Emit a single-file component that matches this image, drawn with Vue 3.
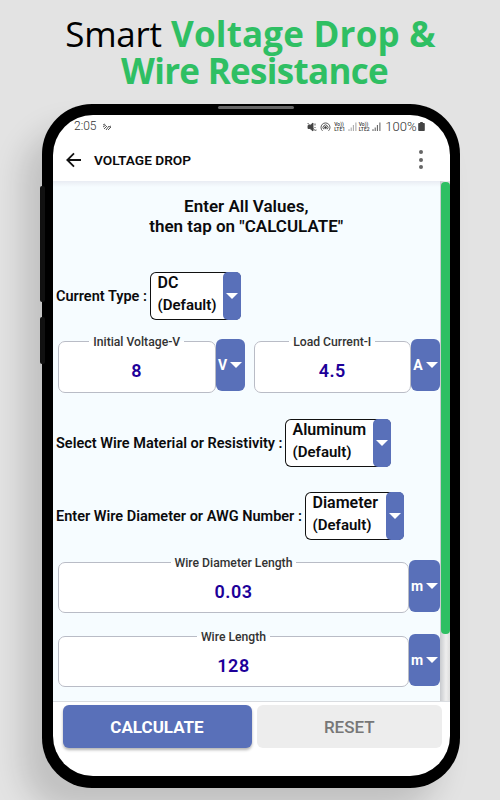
<template>
  <div class="poster">
    <h1 class="title">
      <span class="line first"><span class="dark">Smart</span> Voltage Drop &amp;</span>
      <span class="line second">Wire Resistance</span>
    </h1>

    <div class="phone">
      <i class="side-key volume"></i>
      <i class="side-key power"></i>
      <i class="speaker"></i>

      <div class="screen">
        <div class="status-bar">
          <span class="time">2:05</span>
          <svg class="status-mark" viewBox="0 0 10 8">
            <path d="M1 2l2-1M1 4l3-2M2 6l3-3M4 7l3-4M6 7l3-3M7 4l2-1" />
          </svg>
          <span class="spacer"></span>
          <svg class="mute" viewBox="0 0 10 10">
            <path class="fill" d="M1 3.5h2L6 1v8L3 6.5H1z" />
            <path d="M.6 1l8 8M8 1.5v2M8 5v1M9 7.5v1" />
          </svg>
          <svg class="hotspot" viewBox="0 0 10 10">
            <path d="M2 8.8a4.5 4.5 0 1 1 6 0M3.3 7.3a2.5 2.5 0 1 1 3.4 0" />
            <circle cx="5" cy="5.6" r="1" />
          </svg>
          <template v-for="n in 2" :key="n">
            <span class="lte"><span>Vo))</span><span>LTE{{ n }}</span></span>
            <svg :class="['signal', `signal-${n}`]" viewBox="0 0 9 9">
              <path d="M1 7.2V9M3.2 5.5V9M5.4 3V9M7.9 .5V9" />
            </svg>
          </template>
          <span class="percent">100%</span>
          <svg class="battery" viewBox="0 0 7 9">
            <path d="M2.2 0h2.6v1H6q.8 0 .8.8v6.4q0 .8-.8.8H1q-.8 0-.8-.8V1.8q0-.8.8-.8h1.2z" />
          </svg>
        </div>

        <header class="app-bar">
          <svg class="back" viewBox="0 0 16 16">
            <path d="M15 8H1.5M8 1.3L1.3 8 8 14.7" />
          </svg>
          <span class="app-title">VOLTAGE DROP</span>
          <span class="menu"><i></i><i></i><i></i></span>
        </header>

        <div class="body">
          <main class="form">
            <p class="intro">Enter All Values,<br />then tap on "CALCULATE"</p>

            <div v-for="s in selects" :key="s.id" :class="['select-row', s.id]">
              <span class="label">{{ s.label }}</span>
              <div class="select">
                <span class="value"><b>{{ s.value }}</b><br />(Default)</span>
                <span class="drop"><i class="caret"></i></span>
              </div>
            </div>

            <div v-for="(row, i) in rows" :key="i" :class="['field-row', `row-${i}`]">
              <div v-for="f in row" :key="f.label" class="group">
                <fieldset class="field">
                  <legend>{{ f.label }}</legend>
                  <span class="number">{{ f.value }}</span>
                </fieldset>
                <button class="unit">{{ f.unit }}<i class="caret"></i></button>
              </div>
            </div>
          </main>
          <div class="track"><div class="thumb"></div></div>
        </div>

        <footer class="actions">
          <button class="calculate">CALCULATE</button>
          <button class="reset">RESET</button>
        </footer>
      </div>
    </div>
  </div>
</template>

<script setup>
const selects = [
  { id: 'current', label: 'Current Type :', value: 'DC' },
  { id: 'material', label: 'Select Wire Material or Resistivity :', value: 'Aluminum' },
  { id: 'size', label: 'Enter Wire Diameter or AWG Number :', value: 'Diameter' },
]

const rows = [
  [
    { label: 'Initial Voltage-V', value: '8', unit: 'V' },
    { label: 'Load Current-I', value: '4.5', unit: 'A' },
  ],
  [{ label: 'Wire Diameter Length', value: '0.03', unit: 'm' }],
  [{ label: 'Wire Length', value: '128', unit: 'm' }],
]
</script>

<style>
body {
  margin: 0;
  background: #e3e3e3;
}
</style>

<style scoped>
.poster {
  width: 500px;
  height: 800px;
  box-sizing: border-box;
  padding-top: 15px;
  overflow: hidden;
  background: #e3e3e3;
  font-family: Roboto, 'Liberation Sans', sans-serif;
  color: #0b0b0d;
}

.title {
  display: flex;
  flex-direction: column;
  align-items: center;
  height: 89px;
  margin: 0;
  font: 700 35px/37px 'Open Sans', 'Noto Sans', sans-serif;
  color: #2fbf63;
}

.line { white-space: nowrap; }

.first {
  padding-left: 1px;
  letter-spacing: 0.2px;
}

.second {
  padding-left: 9px;
  letter-spacing: -0.7px;
}

.dark {
  font-weight: 400;
  letter-spacing: -0.3px;
  color: #000;
}

.phone {
  position: relative;
  box-sizing: border-box;
  width: 418px;
  height: 684px;
  margin-left: 42px;
  padding: 11px 10px 12.5px 10.5px;
  border-radius: 50px;
  background: #000;
  box-shadow: -20px 24px 30px rgba(0, 0, 0, 0.15);
}

.side-key {
  position: absolute;
  left: -2px;
  width: 5px;
  border-radius: 2px;
  background: #111;
}

.volume { top: 82px; height: 116px; }
.power { top: 213px; height: 47px; }

.speaker {
  position: absolute;
  top: 2px;
  left: 176px;
  width: 76px;
  height: 3px;
  border-radius: 2px;
  background: #666;
}

.screen {
  display: flex;
  flex-direction: column;
  height: 100%;
  overflow: hidden;
  border-radius: 40px;
  background: #fff;
}

.status-bar {
  display: flex;
  align-items: center;
  height: 23px;
  padding: 0 25px 0 21.5px;
  font: 300 12px/23px Roboto, sans-serif;
  color: #333;
}

.status-bar svg {
  fill: none;
  stroke: #444;
  stroke-width: 0.9;
}

.spacer { flex: 1; }
.status-mark { width: 10px; height: 8px; margin-left: 5px; }
.mute { width: 10px; height: 10px; margin-right: 3px; }
.status-bar .mute .fill, .status-bar circle { fill: #444; }
.hotspot { width: 11px; height: 10px; margin-right: 3px; }

.lte {
  display: flex;
  flex-direction: column;
  width: 12.5px;
  font-size: 5px;
  line-height: 5px;
  font-weight: 500;
}

.signal { width: 9px; height: 9px; margin: 0 2px 0 1px; }
.status-bar .signal-1 { stroke: #999; }
.signal-2 { margin-right: 4px; }
.percent { font-size: 13px; }
.battery { width: 7px; height: 9px; margin-left: 1.5px; }
.status-bar .battery { fill: #444; stroke: none; }

.app-bar {
  display: flex;
  align-items: center;
  height: 43px;
  padding: 0 27px 0 13px;
}

.back {
  width: 16px;
  height: 16px;
  fill: none;
  stroke: #111;
  stroke-width: 1.8;
}

.app-title {
  flex: 1;
  margin-left: 12.5px;
  font-size: 13.7px;
  font-weight: 600;
}

.menu {
  display: flex;
  flex-direction: column;
  gap: 3.5px;
}

.menu i {
  width: 4px;
  height: 4px;
  border-radius: 50%;
  background: #666;
}

.body {
  display: flex;
  height: 520px;
  overflow: hidden;
  background: linear-gradient(#e9ecf3, #f6fcff 6px);
}

.form {
  display: flex;
  flex-direction: column;
  width: 387.5px;
}

.intro {
  height: 76px;
  margin: 0;
  padding: 14.5px 0 0;
  box-sizing: border-box;
  text-align: center;
  font-size: 17px;
  line-height: 20.5px;
  font-weight: 600;
}

/* selects and fields alternate down the form */
.current { order: 1; margin-top: 15px; }
.row-0 { order: 2; margin-top: 19px; }
.material { order: 3; margin-top: 27px; }
.size { order: 4; margin-top: 25px; }
.row-1 { order: 5; margin-top: 20px; }
.row-2 { order: 6; margin-top: 21px; }

.select-row {
  display: flex;
  flex: none;
  align-items: center;
  height: 48px;
  padding-left: 3.5px;
}

.label {
  white-space: nowrap;
  font-size: 14.5px;
  font-weight: 600;
}

.current .label { width: 94px; }
.material .label { width: 229px; }
.size .label { width: 249px; }

.select {
  display: flex;
  box-sizing: border-box;
  height: 48px;
  width: 91px;
  border-radius: 6px;
  box-shadow: inset 0 0 0 1px #111;
  background: #fff;
}

.material .select { width: 106px; }
.size .select { width: 99px; }

.value {
  flex: 1;
  padding: 0 0 0 7.5px;
  font-size: 15px;
  line-height: 21.5px;
  font-weight: 600;
  white-space: nowrap;
}

.value b {
  font-size: 16px;
  font-weight: 600;
}

.drop {
  display: flex;
  flex: none;
  align-items: center;
  justify-content: center;
  width: 18px;
  border-radius: 5px;
  background: #5970b9;
}

.caret {
  width: 0;
  height: 0;
  border: 6px solid transparent;
  border-top-color: #fff;
  border-bottom: 0;
}

.field-row {
  display: flex;
  gap: 9px;
  flex: none;
  height: 53px;
  padding-left: 5.5px;
}

.group {
  display: flex;
  flex: 1;
}

.field {
  flex: 1;
  min-width: 0;
  height: 60px;
  box-sizing: border-box;
  margin: -6px 0 0;
  padding: 0;
  border: 1px solid #b9bcc6;
  border-radius: 7px;
  background: #fff;
  text-align: center;
}

.field legend {
  padding: 2px 4px 0;
  font-size: 12.2px;
  line-height: 14px;
  font-weight: 500;
  color: #333;
}

.number {
  display: block;
  font-size: 18px;
  line-height: 43px;
  font-weight: 600;
  letter-spacing: 0.5px;
  color: #1d0099;
}

.row-1 .field, .row-2 .field { height: 59px; }

.unit {
  display: flex;
  flex: none;
  align-items: center;
  justify-content: center;
  gap: 3px;
  width: 29px;
  height: 52px;
  padding: 0;
  border: 0;
  border-radius: 6px;
  background: #5970b9;
  color: #fff;
  font: 700 14px Roboto, sans-serif;
}

.row-1 .unit, .row-2 .unit { width: 31px; }

.track {
  flex: 1;
  padding: 1px 0 0 1px;
  background: linear-gradient(90deg, #c8cace, #eee 60%, #ddd);
}

.thumb {
  height: 452px;
  border-radius: 4px;
  background: #2fbf63;
}

.actions {
  display: flex;
  flex: 1;
  gap: 5px;
  padding: 3px 8px 0 10px;
  border-top: 1px solid #d9dce0;
}

.actions button {
  height: 43px;
  padding: 0;
  border: 0;
  border-radius: 6px;
  font: 500 17px Roboto, sans-serif;
}

.actions .calculate {
  width: 189px;
  background: #5970b9;
  box-shadow: 0 2px 3px rgba(0, 0, 0, 0.3);
  color: #fff;
  font-weight: 700;
}

.actions .reset {
  flex: 1;
  background: #ededed;
  color: #777;
}
</style>
